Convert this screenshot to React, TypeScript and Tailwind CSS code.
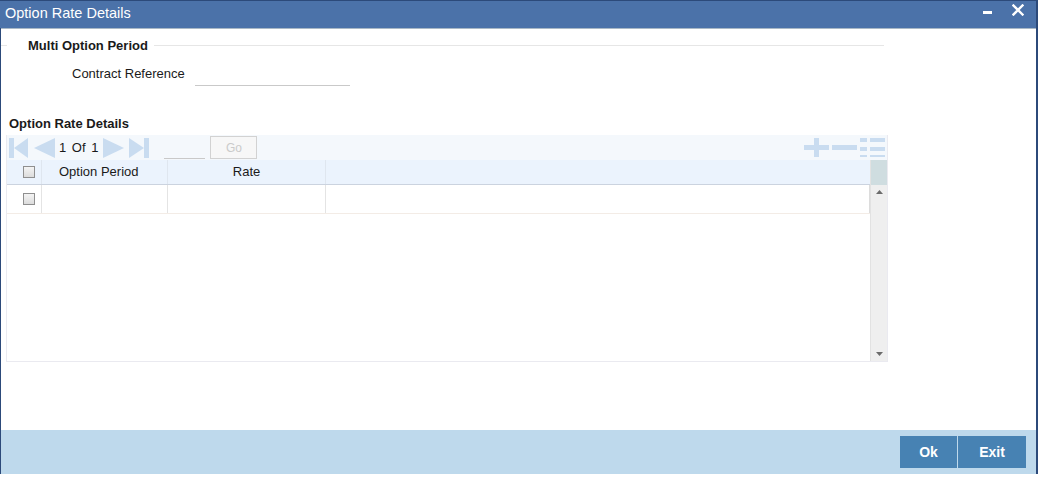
const navBlue = '#c9dcf0';

function NavFirst() {
  return (
    <svg width="19" height="20" viewBox="0 0 19 20">
      <rect x="0" y="0" width="5" height="20" fill={navBlue} />
      <polygon points="19,0 19,20 5,10" fill={navBlue} />
    </svg>
  );
}

function NavPrev() {
  return (
    <svg width="21" height="20" viewBox="0 0 21 20">
      <polygon points="21,0 21,20 0,10" fill={navBlue} />
    </svg>
  );
}

function NavNext() {
  return (
    <svg width="21" height="20" viewBox="0 0 21 20">
      <polygon points="0,0 0,20 21,10" fill={navBlue} />
    </svg>
  );
}

function NavLast() {
  return (
    <svg width="20" height="20" viewBox="0 0 20 20">
      <polygon points="0,0 0,20 15,10" fill={navBlue} />
      <rect x="15" y="0" width="5" height="20" fill={navBlue} />
    </svg>
  );
}

function Checkbox() {
  return (
    <div className="w-[12px] h-[12px] border border-[#8f8f8f] bg-gradient-to-b from-[#f4f4f4] to-[#dcdcdc]" />
  );
}

export default function App() {
  return (
    <div className="w-[1038px] h-[483px] bg-white font-['Liberation_Sans',Arial,sans-serif] text-[#222]">
      <div className="h-[474px] flex flex-col border-l border-r-2 border-[#2c4a7a]">
        {/* title bar */}
        <div className="h-[28px] flex items-start justify-between bg-[#4b72a9] border-t border-[#2c4a7a] pl-[5px] pr-[12px] -ml-px">
          <span className="text-white text-[14.5px] leading-[17px] mt-[4px]">Option Rate Details</span>
          <div className="flex items-start">
            <div className="w-[9px] h-[3px] bg-white mt-[10px]" />
            <svg width="12" height="12" viewBox="0 0 12 12" className="ml-[20px] mt-[3px]">
              <path d="M1.5 1.5 L10.5 10.5 M10.5 1.5 L1.5 10.5" stroke="#fff" strokeWidth="2.4" strokeLinecap="square" />
            </svg>
          </div>
        </div>
        <div className="h-px bg-[#a9b8c6]" />

        {/* body */}
        <div className="flex-1 flex flex-col pt-[9px]">
          <div className="flex items-center w-[883px] h-[15px]">
            <div className="w-[6px] h-px bg-[#e6e6e6]" />
            <span className="ml-[21px] font-bold text-[13px] text-[#1a1a1a]">Multi Option Period</span>
            <div className="flex-1 h-px bg-[#e6e6e6] ml-[6px]" />
          </div>

          <div className="flex items-end mt-[12px] h-[21px]">
            <span className="ml-[71px] text-[13px] mb-[3px] text-[#1a1a1a]">Contract Reference</span>
            <div className="ml-[10px] w-[155px] h-[20px] border-b border-[#c9c9c9]" />
          </div>

          <div className="mt-[30px] ml-[8px] font-bold text-[13px] text-[#1a1a1a] leading-[15px]">Option Rate Details</div>

          {/* grid */}
          <div className="mt-[4px] ml-[5px] w-[882px] h-[227px] border border-[#eaeaf0] border-t-0 flex flex-col">
            {/* toolbar */}
            <div className="h-[25px] bg-[#f4f8fc] flex items-center">
              <div className="ml-[2px] flex items-center">
                <NavFirst />
                <div className="ml-[6px]"><NavPrev /></div>
                <span className="ml-[4px] text-[13px] text-[#1a1a1a] [word-spacing:2px]">1 Of 1</span>
                <div className="ml-[5px]"><NavNext /></div>
                <div className="ml-[5px]"><NavLast /></div>
              </div>
              <div className="ml-[15px] w-[41px] h-[20px] border-b border-[#c9c9c9] self-end mb-px" />
              <div className="ml-[5px] w-[47px] h-[23px] border border-[#d2d2d2] bg-[#f7f7f7] flex items-center justify-center text-[12px] text-[#cacaca]">Go</div>
              <div className="ml-auto mr-[2px] flex items-center gap-[3px]">
                <svg width="25" height="19" viewBox="0 0 25 19">
                  <rect x="0" y="7" width="25" height="5" fill={navBlue} />
                  <rect x="10" y="0" width="5" height="19" fill={navBlue} />
                </svg>
                <svg width="25" height="19" viewBox="0 0 25 19">
                  <rect x="0" y="7" width="25" height="5" fill={navBlue} />
                </svg>
                <svg width="25" height="19" viewBox="0 0 25 19">
                  <rect x="0" y="0" width="7" height="4" fill={navBlue} />
                  <rect x="10" y="0" width="15" height="4" fill={navBlue} />
                  <rect x="0" y="9" width="7" height="4" fill={navBlue} />
                  <rect x="10" y="9" width="15" height="4" fill={navBlue} />
                  <rect x="0" y="17" width="7" height="2" fill={navBlue} />
                  <rect x="10" y="17" width="15" height="2" fill={navBlue} />
                </svg>
              </div>
            </div>

            <div className="flex-1 flex">
              <div className="flex-1 flex flex-col">
                {/* header */}
                <div className="h-[25px] flex bg-[#ebf3fd] border-b border-[#cbd3df] text-[13px] text-[#1a1a1a]">
                  <div className="w-[35px] flex items-center justify-center border-r border-[#dfe6ef]">
                    <div className="ml-[10px]"><Checkbox /></div>
                  </div>
                  <div className="w-[126px] flex items-center pl-[17px] border-r border-[#dfe6ef]">Option Period</div>
                  <div className="w-[158px] flex items-center justify-center border-r border-[#dfe6ef]">Rate</div>
                  <div className="flex-1" />
                </div>
                {/* data row */}
                <div className="h-[29px] flex border-b border-[#f3ece6]">
                  <div className="w-[35px] flex items-center justify-center border-r border-[#e4e4e4]">
                    <div className="ml-[10px]"><Checkbox /></div>
                  </div>
                  <div className="w-[126px] border-r border-[#e4e4e4]" />
                  <div className="w-[158px] border-r border-[#e4e4e4]" />
                  <div className="flex-1 border-r border-[#dcdcdc]" />
                </div>
                <div className="flex-1" />
              </div>
              {/* scrollbar */}
              <div className="w-[17px] flex flex-col bg-[#efefef] border-l border-[#e2e2e2]">
                <div className="h-[25px] bg-[#cfdde0]" />
                <div className="flex-1 flex flex-col items-center justify-between py-[5px]">
                  <svg width="7" height="4" viewBox="0 0 7 4"><polygon points="3.5,0 7,4 0,4" fill="#6b6b6b" /></svg>
                  <svg width="7" height="4" viewBox="0 0 7 4"><polygon points="0,0 7,0 3.5,4" fill="#6b6b6b" /></svg>
                </div>
              </div>
            </div>
          </div>
        </div>

        {/* footer */}
        <div className="h-[44px] bg-[#bed9ec] flex items-start justify-end pt-[6px] pr-[10px]">
          <button className="w-[57px] h-[32px] bg-[#4782b3] text-white font-bold text-[14px]">Ok</button>
          <button className="ml-[1px] w-[68px] h-[32px] bg-[#4782b3] text-white font-bold text-[14px]">Exit</button>
        </div>
      </div>
    </div>
  );
}
